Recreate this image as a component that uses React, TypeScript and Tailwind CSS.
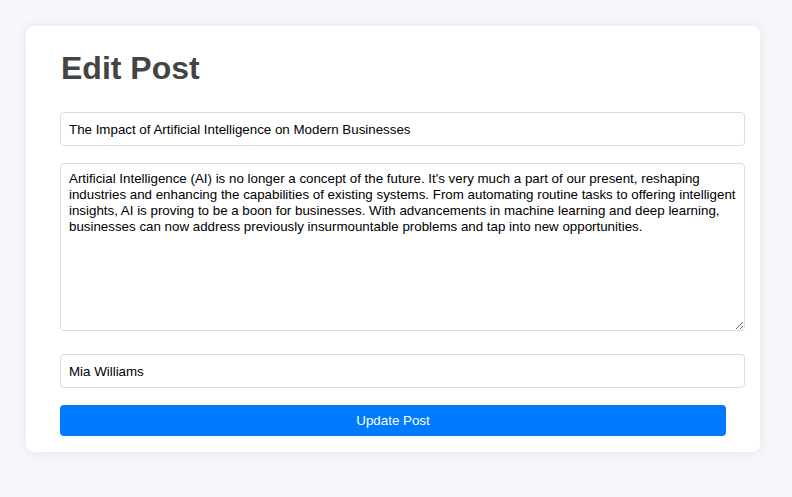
import React from "react";

export default function App() {
  const body =
    "Artificial Intelligence (AI) is no longer a concept of the future. It's very much a part of our present, reshaping industries and enhancing the capabilities of existing systems. From automating routine tasks to offering intelligent insights, AI is proving to be a boon for businesses. With advancements in machine learning and deep learning, businesses can now address previously insurmountable problems and tap into new opportunities.";
  return (
    <div className="min-h-[497px] bg-[#f6f7fb] pt-[26px] font-['Liberation_Sans',Arial,sans-serif]">
      <div className="ml-[26px] w-[734px] rounded-[8px] bg-white px-[34px] pt-[24px] pb-[16px] shadow-[0_0_12px_rgba(0,0,0,0.08)]">
        <h1 className="m-0 pl-[1px] text-[32px] leading-[37px] font-bold text-[#444444]">Edit Post</h1>
        <div className="mt-[25px] flex flex-col items-start">
          <input
            className="box-border h-[34px] w-[685px] rounded-[4px] border border-[#dcdcdc] px-[8px] text-[13.333px] text-black outline-none"
            defaultValue="The Impact of Artificial Intelligence on Modern Businesses"
          />
          <textarea
            className="mt-[17px] box-border block h-[168px] w-[685px] rounded-[4px] border border-[#dcdcdc] px-[8px] py-[7px] text-[13.333px] leading-[16px] text-black outline-none"
            defaultValue={body}
          />
          <input
            className="mt-[23px] box-border h-[34px] w-[685px] rounded-[4px] border border-[#dcdcdc] px-[8px] text-[13.333px] text-black outline-none"
            defaultValue="Mia Williams"
          />
          <button className="mt-[17px] h-[31px] w-[666px] rounded-[4px] bg-[#007bff] text-[13.333px] text-white">
            Update Post
          </button>
        </div>
      </div>
    </div>
  );
}
